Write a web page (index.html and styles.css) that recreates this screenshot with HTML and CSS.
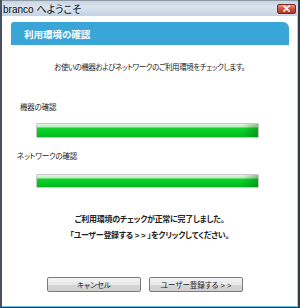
FILE: index.html
```html
<!DOCTYPE html>
<html lang="ja">
<head>
    <meta charset="UTF-8">
    <title>branco へようこそ</title>
    <link rel="stylesheet" href="styles.css">
</head>
<body>

    <!-- Window -->
    <div class="window">
        <div class="titlebar">
            <span class="title">branco へようこそ</span>
            <div class="close">
                <svg width="9" height="7" viewBox="0 0 9 7">
                    <path d="M1.5 0.5 L7.5 6.5 M7.5 0.5 L1.5 6.5" stroke="#fff" stroke-width="1.6"/>
                </svg>
            </div>
        </div>

        <div class="client">
            <div class="tab">利用環境の確認</div>

            <p class="intro">お使いの機器およびネットワークのご利用環境をチェックします。</p>

            <p class="label label-device">機器の確認</p>
            <div class="bar"><div class="fill" style="width: 100%;"></div></div>

            <p class="label label-network">ネットワークの確認</p>
            <div class="bar"><div class="fill" style="width: 100%;"></div></div>

            <div class="message">
                <p>ご利用環境のチェックが正常に完了しました。</p>
                <p>「ユーザー登録する &gt; &gt; 」をクリックしてください。</p>
            </div>

            <div class="buttons">
                <button class="btn">キャンセル</button>
                <button class="btn">ユーザー登録する &gt; &gt;</button>
            </div>
        </div>
    </div>

</body>
</html>
```

FILE: styles.css
```css
* {
    margin: 0;
    padding: 0;
    box-sizing: border-box;
}
body {
    font-family: "Liberation Sans", "Noto Sans CJK JP", sans-serif;
    font-feature-settings: "palt";
    background-color: #3b4652;
    color: #222;
    width: 300px;
    height: 308px;
    overflow: hidden;
}
.window {
    width: 300px;
    height: 308px;
    background-color: #fff;
    border-left: 2px solid #46525e;
    border-right: 2px solid #2f3b47;
    border-bottom: 1px solid #2f3b47;
    display: flex;
    flex-direction: column;
}
.titlebar {
    height: 16px;
    display: flex;
    align-items: center;
    padding-left: 1px;
    background: linear-gradient(to bottom, #c9d5e2 0%, #dbe4ee 40%, #c3d2e2 100%);
    border-top: 1px solid #8e9aa6;
}
.title {
    font-size: 10px;
    color: #111;
}
.close {
    margin-left: auto;
    margin-right: 2px;
    width: 19px;
    height: 10px;
    border-radius: 2px;
    border: 1px solid #7b2a22;
    background: linear-gradient(to bottom, #e39a8c 0%, #c9503e 50%, #b23a28 100%);
    display: flex;
    align-items: center;
    justify-content: center;
}
.close svg {
    display: block;
}
.client {
    flex: 1;
    border-right: 1px solid #a9d3ea;
    border-bottom: 1px solid #6fc0e6;
}
.tab {
    margin: 6px 8px 0 9px;
    height: 23px;
    padding-left: 13px;
    background-color: #3aa6d8;
    border-radius: 3px 6px 0 0;
    color: #fff;
    font-size: 9.5px;
    font-weight: bold;
    line-height: 25px;
}
.intro {
    margin-top: 17px;
    font-size: 7.5px;
    letter-spacing: -0.45px;
    line-height: 12px;
    text-align: center;
}
.label {
    font-size: 7.5px;
    letter-spacing: -0.2px;
    line-height: 12px;
}
.label-device {
    margin-top: 28px;
    padding-left: 18px;
}
.label-network {
    margin-top: 13px;
    padding-left: 15px;
}
.bar {
    margin: 9px 0 0 34px;
    width: 223px;
    height: 15px;
    border: 1px solid #c4c9c4;
    border-radius: 1px;
    background-color: #eee;
    overflow: hidden;
}
.label-network + .bar {
    margin-top: 11px;
    height: 14px;
}
.fill {
    height: 100%;
    background:
        linear-gradient(to right, rgba(0, 90, 0, 0) 0, rgba(0, 90, 0, 0) 93%, rgba(0, 90, 0, 0.35) 100%),
        linear-gradient(to bottom, #e8f7e8 0, #b9ecbc 3px, #13d12f 4px, #03c723 70%, #06b41f 100%);
}
.message {
    margin-top: 24px;
    text-align: center;
    font-size: 8px;
    font-weight: bold;
    letter-spacing: -0.3px;
    line-height: 16px;
}
.buttons {
    margin: 33px 0 0 45px;
    display: flex;
    gap: 8px;
}
.btn {
    height: 15px;
    width: 94px;
    font-family: "Liberation Sans", "Noto Sans CJK JP", sans-serif;
    font-feature-settings: "palt";
    font-size: 7.5px;
    color: #222;
    border: 1px solid #7b7b7b;
    border-radius: 2px;
    background: linear-gradient(to bottom, #f4f4f4 0%, #e8e8e8 50%, #d6d6d6 52%, #cfcfcf 100%);
}
```
